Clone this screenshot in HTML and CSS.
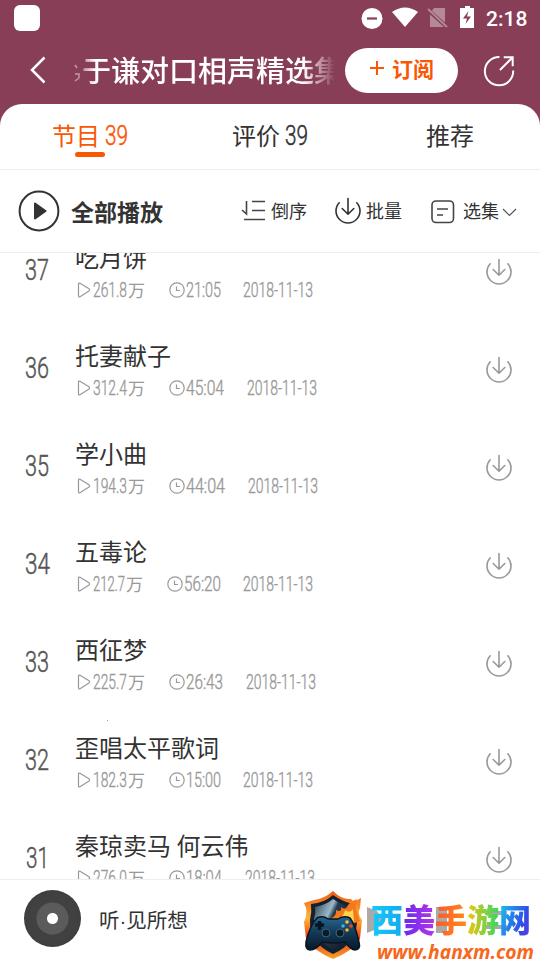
FILE: index.html
```html
<!DOCTYPE html>
<html lang="zh-CN">
<head>
<meta charset="utf-8">
<title>节目列表</title>
<link rel="stylesheet" href="styles.css">
</head>
<body>
<svg class="defs" width="0" height="0">
  <symbol id="download" viewBox="0 0 28 28"><path d="M5.2 6.8A12 12 0 1 0 22.8 6.8M14 2.5V18M8.2 12.5L14 18.2L19.8 12.5" fill="none" stroke="currentColor" stroke-linecap="round" stroke-linejoin="round"/></symbol>
  <symbol id="play" viewBox="0 0 14 16"><path d="M1.500 2.200Q1.500.5 3 1.300L12 6.800Q13.200 8 12 9L3 14.700Q1.500 15.500 1.500 13.800Z" fill="none" stroke="currentColor" stroke-width="1.200"/></symbol>
  <symbol id="clock" viewBox="0 0 16 16"><circle cx="8" cy="8" r="7.200" fill="none" stroke="currentColor" stroke-width="1.200"/><path d="M7.500 4.500V8.500H11" fill="none" stroke="currentColor" stroke-width="1.200"/></symbol>
</svg>
<header class="top">
  <div class="status">
    <i class="app-square"></i>
    <svg class="status-icons" width="118" height="26" viewBox="0 0 118 26">
      <circle cx="11" cy="13.500" r="10.500" fill="#fff"/><path d="M6 13.500H16" stroke="#873e56" stroke-width="2.200"/>
      <path d="M31 7Q44-2 57 7L44 22Z" fill="#fff"/>
      <path d="M73 3H84V22H69V8Z" fill="#b5899a"/><path d="M67 5L86 22" stroke="#873e56" stroke-width="4"/><path d="M67 4L86 22" stroke="#b5899a" stroke-width="1.800"/>
      <path d="M104 1H109V3H113V23H99V3H104Z" fill="#fff"/><path d="M107.500 6L102 13.500H106L104.500 19L110 11.500H106Z" fill="#873e56"/>
    </svg>
    <span class="time">2:18</span>
  </div>
  <div class="navbar">
    <svg class="back" width="18" height="28" viewBox="0 0 18 28"><path d="M15.500 1.500L3 14L15.500 26.500" fill="none" stroke="#fff" stroke-width="2.500"/></svg>
    <svg class="trail" width="6" height="18" viewBox="0 0 6 18"><path d="M1 1L3 4M1 10H5V14M1 17L5 14" fill="none" stroke="#c39aa8" stroke-width="1.500"/></svg>
    <h1 class="title">于谦对口相声精选集</h1>
    <button class="subscribe"><svg width="16" height="16" viewBox="0 0 16 16"><path d="M1 8H15M8 1V15" stroke="currentColor" stroke-width="2"/></svg>订阅</button>
    <svg class="share" width="34" height="34" viewBox="0 0 36 36"><path d="M18.500 3.200A15 15 0 1 0 33 17.500M19 17L32 4M23 3.500H32.500V13" fill="none" stroke="#fff" stroke-width="2.100"/></svg>
  </div>
</header>
<main class="sheet">
  <nav class="tabs">
    <a class="tab active">节目<svg width="24" height="30"><text x="1" y="24" textLength="23" lengthAdjust="spacingAndGlyphs">39</text></svg></a>
    <a class="tab">评价<svg width="24" height="30"><text x="1" y="24" textLength="23" lengthAdjust="spacingAndGlyphs">39</text></svg></a>
    <a class="tab">推荐</a>
  </nav>
  <div class="tools">
    <svg class="playall" width="42" height="42" viewBox="0 0 42 42"><circle cx="21" cy="21" r="19.400" fill="none" stroke="#333" stroke-width="2"/><path d="M17 13.500L27.500 21L17 28.500Z" fill="#333" stroke="#333" stroke-width="2" stroke-linejoin="round"/></svg>
    <strong>全部播放</strong>
    <span class="tool order"><svg width="26" height="24" viewBox="0 0 26 24"><path d="M1 12L5.500 16V3M11 3.500H24M11 12.500H24M3 21.500H24" fill="none" stroke="#444" stroke-width="1.600"/></svg>倒序</span>
    <span class="tool batch"><svg width="28" height="28"><use href="#download"/></svg>批量</span>
    <span class="tool choose"><svg class="box" width="24" height="24" viewBox="0 0 24 24"><rect x="1" y="1" width="21.500" height="21.500" rx="4" fill="none" stroke="#444" stroke-width="1.600"/><path d="M6 9H17M6 15H12" stroke="#444" stroke-width="1.500"/></svg>选集<svg class="chev" width="15" height="9" viewBox="0 0 15 9"><path d="M1 1L7.500 7.500L14 1" fill="none" stroke="#555" stroke-width="1.200"/></svg></span>
  </div>
  <section class="list">
    <article class="row">
      <svg class="num" width="26" height="30"><text x="1" y="26" textLength="24" lengthAdjust="spacingAndGlyphs">37</text></svg>
      <div class="info"><h2>吃月饼</h2><div class="meta"><svg class="p" width="14" height="16"><use href="#play"/></svg><svg class="n" width="35" height="22"><text y="18" textLength="34" lengthAdjust="spacingAndGlyphs">261.8</text></svg><b>万</b><svg class="c" width="16" height="16"><use href="#clock"/></svg><svg class="n" width="57" height="22"><text y="18" textLength="35" lengthAdjust="spacingAndGlyphs">21:05</text></svg><svg class="n" width="72" height="22"><text y="18" textLength="70" lengthAdjust="spacingAndGlyphs">2018-11-13</text></svg></div></div>
      <svg class="dl" width="28" height="28"><use href="#download"/></svg>
    </article>
    <article class="row">
      <svg class="num" width="26" height="30"><text x="1" y="26" textLength="24" lengthAdjust="spacingAndGlyphs">36</text></svg>
      <div class="info"><h2>托妻献子</h2><div class="meta"><svg class="p" width="14" height="16"><use href="#play"/></svg><svg class="n" width="35" height="22"><text y="18" textLength="34" lengthAdjust="spacingAndGlyphs">312.4</text></svg><b>万</b><svg class="c" width="16" height="16"><use href="#clock"/></svg><svg class="n" width="61" height="22"><text y="18" textLength="38" lengthAdjust="spacingAndGlyphs">45:04</text></svg><svg class="n" width="72" height="22"><text y="18" textLength="70" lengthAdjust="spacingAndGlyphs">2018-11-13</text></svg></div></div>
      <svg class="dl" width="28" height="28"><use href="#download"/></svg>
    </article>
    <article class="row">
      <svg class="num" width="26" height="30"><text x="1" y="26" textLength="24" lengthAdjust="spacingAndGlyphs">35</text></svg>
      <div class="info"><h2>学小曲</h2><div class="meta"><svg class="p" width="14" height="16"><use href="#play"/></svg><svg class="n" width="35" height="22"><text y="18" textLength="34" lengthAdjust="spacingAndGlyphs">194.3</text></svg><b>万</b><svg class="c" width="16" height="16"><use href="#clock"/></svg><svg class="n" width="62" height="22"><text y="18" textLength="39" lengthAdjust="spacingAndGlyphs">44:04</text></svg><svg class="n" width="72" height="22"><text y="18" textLength="70" lengthAdjust="spacingAndGlyphs">2018-11-13</text></svg></div></div>
      <svg class="dl" width="28" height="28"><use href="#download"/></svg>
    </article>
    <article class="row">
      <svg class="num" width="26" height="30"><text x="1" y="26" textLength="25" lengthAdjust="spacingAndGlyphs">34</text></svg>
      <div class="info"><h2>五毒论</h2><div class="meta"><svg class="p" width="14" height="16"><use href="#play"/></svg><svg class="n" width="33" height="22"><text y="18" textLength="32" lengthAdjust="spacingAndGlyphs">212.7</text></svg><b>万</b><svg class="c" width="16" height="16"><use href="#clock"/></svg><svg class="n" width="59" height="22"><text y="18" textLength="37" lengthAdjust="spacingAndGlyphs">56:20</text></svg><svg class="n" width="72" height="22"><text y="18" textLength="70" lengthAdjust="spacingAndGlyphs">2018-11-13</text></svg></div></div>
      <svg class="dl" width="28" height="28"><use href="#download"/></svg>
    </article>
    <article class="row">
      <svg class="num" width="26" height="30"><text x="1" y="26" textLength="24" lengthAdjust="spacingAndGlyphs">33</text></svg>
      <div class="info"><h2>西征梦</h2><div class="meta"><svg class="p" width="14" height="16"><use href="#play"/></svg><svg class="n" width="35" height="22"><text y="18" textLength="34" lengthAdjust="spacingAndGlyphs">225.7</text></svg><b>万</b><svg class="c" width="16" height="16"><use href="#clock"/></svg><svg class="n" width="60" height="22"><text y="18" textLength="37" lengthAdjust="spacingAndGlyphs">26:43</text></svg><svg class="n" width="72" height="22"><text y="18" textLength="70" lengthAdjust="spacingAndGlyphs">2018-11-13</text></svg></div></div>
      <svg class="dl" width="28" height="28"><use href="#download"/></svg>
    </article>
    <article class="row">
      <svg class="num" width="26" height="30"><text x="1" y="26" textLength="24" lengthAdjust="spacingAndGlyphs">32</text></svg>
      <div class="info"><h2>歪唱太平歌词</h2><div class="meta"><svg class="p" width="14" height="16"><use href="#play"/></svg><svg class="n" width="35" height="22"><text y="18" textLength="34" lengthAdjust="spacingAndGlyphs">182.3</text></svg><b>万</b><svg class="c" width="16" height="16"><use href="#clock"/></svg><svg class="n" width="57" height="22"><text y="18" textLength="35" lengthAdjust="spacingAndGlyphs">15:00</text></svg><svg class="n" width="72" height="22"><text y="18" textLength="70" lengthAdjust="spacingAndGlyphs">2018-11-13</text></svg></div></div>
      <svg class="dl" width="28" height="28"><use href="#download"/></svg>
    </article>
    <article class="row">
      <svg class="num" width="26" height="30"><text x="2" y="26" textLength="23" lengthAdjust="spacingAndGlyphs">31</text></svg>
      <div class="info"><h2>秦琼卖马 何云伟</h2><div class="meta"><svg class="p" width="14" height="16"><use href="#play"/></svg><svg class="n" width="35" height="22"><text y="18" textLength="34" lengthAdjust="spacingAndGlyphs">276.0</text></svg><b>万</b><svg class="c" width="16" height="16"><use href="#clock"/></svg><svg class="n" width="59" height="22"><text y="18" textLength="36" lengthAdjust="spacingAndGlyphs">18:04</text></svg><svg class="n" width="72" height="22"><text y="18" textLength="70" lengthAdjust="spacingAndGlyphs">2018-11-13</text></svg></div></div>
      <svg class="dl" width="28" height="28"><use href="#download"/></svg>
    </article>
    <i class="speck"></i>
  </section>
</main>
<footer class="player">
  <i class="disc"></i>
  <span class="track">听·见所想</span>
  <div class="brand">
    <svg width="62" height="70" viewBox="0 0 62 70">
      <defs>
        <linearGradient id="rim" x1="0" y1="0" x2="0" y2="1"><stop offset="0" stop-color="#f05a13"/><stop offset=".4" stop-color="#ffb43b"/><stop offset=".7" stop-color="#e93c16"/><stop offset="1" stop-color="#f9a42b"/></linearGradient>
        <linearGradient id="steel" x1="0" y1="0" x2="1" y2=".6"><stop offset="0" stop-color="#243c50"/><stop offset=".4" stop-color="#9db9c9"/><stop offset=".5" stop-color="#263b4d"/><stop offset="1" stop-color="#111c2b"/></linearGradient>
        <linearGradient id="pad" x1="0" y1="0" x2="0" y2="1"><stop offset="0" stop-color="#27678f"/><stop offset=".5" stop-color="#123852"/><stop offset="1" stop-color="#081729"/></linearGradient>
      </defs>
      <path d="M31 1Q40 10 49 9L52 12L59 8L58 18Q55 23 60 30L58 49Q51 61 31 69Q12 61 4 49L2 32Q7 22 2 13L12 10Q22 9 31 1Z" fill="url(#rim)"/>
      <path d="M31 5Q41 12 52 14Q51 22 55 28Q56 53 31 64Q7 53 8 30Q10 22 9 14Q22 13 31 5Z" fill="#142230"/>
      <path d="M31 9Q40 15 48 17Q47 24 51 30Q50 50 31 59Q12 50 12 29Q14 23 13 17Q24 15 31 9Z" fill="url(#steel)"/>
      <path d="M28 29Q35 26 34 20Q40 23 39 17Q43 20 45 17Q47 12 55 9Q52 17 55 22L58 31L48 35Z" fill="#f5781d"/><path d="M36 29Q43 25 43 20Q48 24 51 19L52 32Z" fill="#ffd34a"/>
      <path d="M15 28Q21 25 26 29H36Q42 25 48 28Q53 34 57 52Q59 60 53 60Q49 60 43 52Q31 54 20 52Q14 60 8 60Q3 60 4 52Q8 35 15 28Z" fill="url(#pad)" stroke="#071523" stroke-width="1.500"/>
      <path d="M13 35H22M17.500 31V40" stroke="#081526" stroke-width="3.500"/>
      <circle cx="24" cy="43" r="4" fill="#0a1a29" stroke="#376681"/><circle cx="38" cy="43" r="4" fill="#0a1a29" stroke="#376681"/>
      <circle cx="45" cy="32" r="1.800" fill="#ffc02f"/><circle cx="49" cy="36" r="1.800" fill="#f14724"/><circle cx="41" cy="36" r="1.800" fill="#41afe2"/><circle cx="45" cy="40" r="1.800" fill="#ffaf25"/>
    </svg>
    <div class="words">
      <svg class="ghost" width="170" height="26"><path d="M0 0L10 4L16 13L10 22L0 26ZM69 0H80V26H69ZM118 4H140V8H118ZM118 18H140V22H118Z" fill="#aaa"/></svg>
      <div class="name"><span class="g1">西</span><span class="g2">美</span><span class="g3">手</span><span class="g4">游</span><span class="g5">网</span></div>
      <svg class="url" width="162" height="22"><text x="1" y="18" textLength="157" lengthAdjust="spacingAndGlyphs">www.hanxm.com</text></svg>
    </div>
  </div>
</footer>
</body>
</html>
```
FILE: styles.css
```css
* { box-sizing: border-box; }
body { margin: 0; width: 540px; height: 960px; overflow: hidden; display: flex; flex-direction: column; background: #873e56; color: #333; font-family: "Noto Sans CJK SC", sans-serif; }
svg { flex: none; display: block; overflow: visible; }
.defs { position: absolute; }
.top { height: 104px; flex: none; }
.status { height: 36px; display: flex; align-items: center; padding: 0 12px 0 14px; }
.app-square { width: 26px; height: 26px; border-radius: 6px; background: #fff; }
.status-icons { margin-left: auto; }
.time { font: 500 21px/26px Roboto, sans-serif; color: #fff; margin-left: 7px; margin-top: 2px; width: 42px; white-space: nowrap; }
.navbar { height: 68px; display: flex; align-items: center; padding-left: 29px; }
.trail { margin: 6px 0 0 27px; }
.title { margin: 0 0 2px -7px; padding-left: 9px; width: 262px; height: 44px; white-space: nowrap; color: #fff; font-weight: 500; font-size: 29px; line-height: 44px; -webkit-mask-image: linear-gradient(90deg, transparent 0, #000 22px, #000 230px, transparent 262px); mask-image: linear-gradient(90deg, transparent 0, #000 22px, #000 230px, transparent 262px); }
.subscribe { width: 113px; height: 45px; margin-left: 10px; border: 0; border-radius: 23px; background: #fff; color: #fa5705; display: flex; align-items: center; justify-content: center; gap: 7px; font: 700 21px/30px "Noto Sans CJK SC", sans-serif; padding: 0 0 4px; }
.share { margin-left: 24px; margin-top: 2px; }
.sheet { height: 775px; flex: none; display: flex; flex-direction: column; background: #fff; border-radius: 22px 22px 0 0; overflow: hidden; }
.tabs { height: 66px; flex: none; display: grid; grid-template-columns: repeat(3, 1fr); border-bottom: 1px solid #eee; }
.tab { position: relative; display: flex; justify-content: center; gap: 4px; font-size: 24px; line-height: 62px; height: 65px; }
.tab svg { margin-top: 17px; }
.tab text { font: 300 27px Roboto, sans-serif; fill: currentColor; stroke: currentColor; stroke-width: .5; }
.active { color: #fa5705; }
.active::after { content: ""; position: absolute; left: 75px; top: 48px; width: 30px; height: 5px; border-radius: 3px; background: #fa5705; }
.tools { height: 83px; flex: none; display: flex; align-items: center; padding-left: 18px; border-bottom: 1px solid #eee; }
.tools strong { margin-left: 11px; width: 93px; font-size: 23px; line-height: 36px; font-weight: 700; white-space: nowrap; }
.tool { display: flex; align-items: center; font-size: 18px; line-height: 28px; margin-top: -2px; color: #333; white-space: nowrap; }
.order { margin-left: 77px; gap: 4px; }
.batch { margin-left: 27px; gap: 4px; stroke-width: 1.6; }
.choose { margin-left: 29px; gap: 8px; }
.box { margin-top: 3px; }
.chev { margin: 4px 0 0 -5px; }
.list { position: relative; height: 626px; overflow: hidden; padding: 0 27px 0 24px; }
.row { height: 98px; display: flex; align-items: flex-start; }
.row:first-child { margin-top: -24px; }
.num { margin-top: 25px; }
.num text { font: 300 30px Roboto, sans-serif; fill: #555; stroke: #555; stroke-width: .5; }
.info { margin-left: 25px; flex: 1; }
h2 { margin: 9px 0 0; font-size: 24px; line-height: 38px; font-weight: 400; color: #333; white-space: nowrap; }
.meta { display: flex; align-items: center; height: 22px; margin-top: 3px; padding-left: 2px; color: #999; }
.p { margin-right: 2px; }
.n text { font: 300 20.5px Roboto, sans-serif; fill: #999; stroke: #999; stroke-width: .4; }
.meta b { font-weight: 400; font-size: 17px; line-height: 22px; width: 17px; }
.c { margin-left: 24px; margin-right: 1px; }
.dl { margin: 28px 0 0; color: #999; stroke-width: 1.6; }
.speck { position: absolute; left: 107px; top: 467px; width: 1px; height: 1px; background: #999; }
.player { height: 81px; flex: none; border-top: 1px solid #eee; background: #fff; display: flex; align-items: flex-start; padding: 10px 0 0 24px; }
.disc { width: 57px; height: 57px; border-radius: 50%; background: radial-gradient(circle, #fff 0 5px, #5b5b5b 6px 15.5px, #414141 16.5px 23px, #3a3a3a); }
.track { margin-left: 18px; margin-top: 14px; width: 90px; font-family: "Liberation Sans", "Noto Sans CJK SC", sans-serif; font-size: 20.5px; line-height: 34px; white-space: nowrap; }
.brand { display: flex; margin-left: 113px; }
.words { position: relative; width: 172px; margin-left: 3px; }
.ghost { position: absolute; left: 0; top: 17px; }
.name { position: relative; display: flex; width: 162px; height: 46px; margin: 5px 0 0 4px; font-size: 32px; line-height: 46px; font-weight: 900; }
.name span { width: 32px; color: transparent; background-clip: text; -webkit-background-clip: text; white-space: nowrap; }
.g1 { background-image: linear-gradient(90deg, #10cdfc, #16a9ee); }
.g2 { background-image: linear-gradient(90deg, #6929f0, #b535eb); }
.g3 { background-image: linear-gradient(100deg, #ff4f32, #ff9413); }
.g4 { background-image: linear-gradient(90deg, #f2c40b, #32d866); }
.g5 { background-image: linear-gradient(110deg, #14d6ed, #304be9 70%, #6a35e8); }
.url { margin: 0 0 0 9px; }
.url text { font: italic 700 19px "Open Sans", sans-serif; fill: #f8671b; }
```
